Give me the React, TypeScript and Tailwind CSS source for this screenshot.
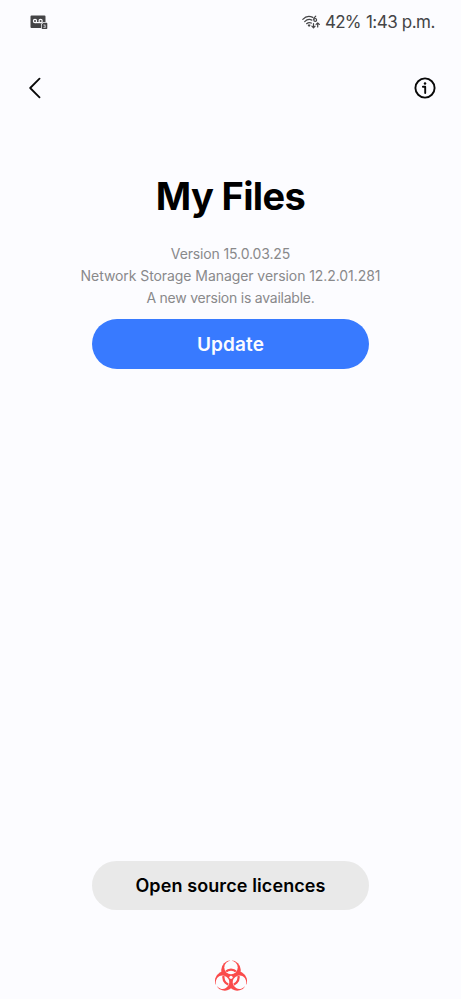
const VoicemailIcon = () => (
  <svg className="w-[18px] h-[15px]" viewBox="0 0 18 15" fill="none">
    <path d="M1.500 0.500h13a1 1 0 0 1 1 1V7h-2.600L11 9v4H1.500a1 1 0 0 1-1-1V1.500a1 1 0 0 1 1-1z" fill="#444446" />
    <circle cx="5" cy="6" r="1.600" stroke="#fcfcff" strokeWidth="1.200" />
    <circle cx="10.600" cy="6" r="1.600" stroke="#fcfcff" strokeWidth="1.200" />
    <path d="M5 7.600h5.600" stroke="#fcfcff" strokeWidth="1.200" />
    <path
      d="M13.300 7.800h3.200a.8.8 0 0 1 .8.8v4.600a.8.8 0 0 1-.8.8h-4a.8.8 0 0 1-.8-.8V9.400z"
      fill="#444446"
    />
    <path d="M13.400 10h2l-1 1.200h1v1.300h-2" stroke="#fcfcff" strokeWidth="0.600" />
  </svg>
);

const WifiIcon = () => (
  <svg
    className="w-[18px] h-[14px]"
    viewBox="0 0 18 14"
    fill="none"
    stroke="#444446"
    strokeWidth="1.200"
    strokeLinecap="round"
    strokeLinejoin="round"
  >
    <path d="M0.800 4.300C3.500 1.500 7.500 0.900 10.800 2.400" />
    <path d="M2.700 6.600C4.800 4.500 7.500 4 9.900 5.100" />
    <path d="M4.600 8.700C6 7.500 7.900 7.300 9.300 8.100" />
    <path d="M6.300 10.200h1.600l-.8 1z" fill="#444446" />
    <path d="M13.700 1.200c-1.300.9-2 2-2 3.100" />
    <circle cx="13.200" cy="4.900" r="1.400" />
    <path d="M11.500 8.600v4M9.900 11.200l1.600 1.600 1.600-1.600" />
    <path d="M15.700 12V8M14.100 9.400l1.600-1.600 1.600 1.600" />
  </svg>
);

const BackIcon = () => (
  <svg className="w-3 h-[22px]" viewBox="0 0 12 22" fill="none">
    <path
      d="M10.500 1.700L1.200 11l9.300 9.300"
      stroke="#080808"
      strokeWidth="1.800"
      strokeLinecap="round"
      strokeLinejoin="round"
    />
  </svg>
);

const InfoIcon = () => (
  <svg className="w-[22px] h-[22px]" viewBox="0 0 22 22" fill="none">
    <circle cx="11" cy="11" r="9.600" stroke="#080808" strokeWidth="1.900" />
    <circle cx="11" cy="6.500" r="1.250" fill="#080808" />
    <path d="M8.900 9.800h2.300v6.200" stroke="#080808" strokeWidth="1.900" strokeLinecap="round" strokeLinejoin="round" />
  </svg>
);

const angles = [0, 120, 240];

// Three open crescents around a centre hole, with a ring showing through them
const BiohazardIcon = () => (
  <svg className="w-8 h-[31px]" viewBox="-24.500 -26 49 46.500">
    <mask id="crescents" maskUnits="userSpaceOnUse" x="-30" y="-30" width="60" height="60">
      {angles.map((angle) => (
        <circle key={angle} cy="-11" r="15" fill="white" transform={`rotate(${angle})`} />
      ))}
      {angles.map((angle) => (
        <g key={angle} transform={`rotate(${angle})`} fill="black">
          <circle cy="-15" r="10.300" />
          <rect x="-2" y="-28" width="4" height="8" />
        </g>
      ))}
      <circle r="2.500" fill="black" />
    </mask>
    <clipPath id="openings">
      {angles.map((angle) => (
        <circle key={angle} cy="-15" r="9.700" transform={`rotate(${angle})`} />
      ))}
    </clipPath>
    <rect x="-30" y="-30" width="60" height="60" fill="#fa4b4b" mask="url(#crescents)" />
    <circle r="11.700" fill="none" stroke="#fa4b4b" strokeWidth="3.500" clipPath="url(#openings)" />
  </svg>
);

const App = () => {
  return (
    <div className="flex flex-col w-full h-screen overflow-hidden bg-[#fcfcff] font-['Inter',sans-serif] text-black">
      {/* Status bar */}
      <div className="flex items-center justify-between h-11 pl-[30px] pr-[26px] text-[#444446]">
        <VoicemailIcon />
        <div className="flex items-center">
          <WifiIcon />
          <span className="ml-[5px] pt-0.5 w-[35px] text-[17px] tracking-[-0.7px] whitespace-nowrap">42%</span>
          <span className="ml-[6px] pt-0.5 text-[17px] tracking-[-0.45px] whitespace-nowrap">1:43 p.m.</span>
        </div>
      </div>

      {/* Toolbar */}
      <div className="flex items-center justify-between h-[88px] pl-[29px] pr-[25px]">
        <button aria-label="Back">
          <BackIcon />
        </button>
        <button aria-label="App info">
          <InfoIcon />
        </button>
      </div>

      {/* App details */}
      <div className="flex flex-col items-center mt-10 text-center">
        <h1 className="text-[38px] leading-[48px] font-bold tracking-[-0.65px]">My Files</h1>
        <div className="mt-[23px] text-[14px] leading-[22px] text-[#89898b]">
          <p className="tracking-[-0.13px]">Version 15.0.03.25</p>
          <p className="tracking-[-0.07px]">Network Storage Manager version 12.2.01.281</p>
          <p className="tracking-[-0.23px]">A new version is available.</p>
        </div>
        <button className="mt-[10px] pt-[3px] w-[277px] h-[50px] rounded-full bg-[#387aff] text-[19px] font-semibold tracking-[0.1px] text-[#fcfcff]">
          Update
        </button>
      </div>

      <div className="flex flex-col items-center mt-auto pb-2">
        <button className="w-[277px] h-[49px] rounded-full bg-[#e9e9e9] text-[18px] font-semibold tracking-[0.1px]">
          Open source licences
        </button>
        <div className="mt-[50px]">
          <BiohazardIcon />
        </div>
      </div>
    </div>
  );
};

export default App;
